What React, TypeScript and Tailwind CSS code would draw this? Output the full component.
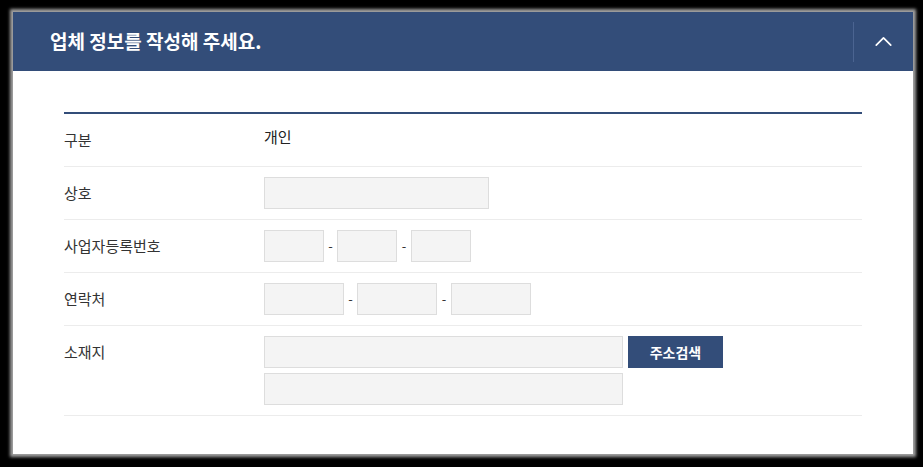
import { ChevronUp } from "lucide-react";

const font = { fontFamily: '"Noto Sans CJK KR", "Noto Sans", sans-serif' };

function Field({ w }: { w: string }) {
  return <div className={`${w} h-8 bg-[#f4f4f4] border border-[#dddddd]`} />;
}

function Dash({ w = "w-[13px]" }: { w?: string }) {
  return <span className={`${w} text-center text-[13px] leading-8 text-[#333]`}>-</span>;
}

function Row({ label, children }: { label: string; children: React.ReactNode }) {
  return (
    <div className="flex border-b border-[#ececec] py-[10px]">
      <div className="w-[200px] shrink-0 text-[15px] leading-8 text-[#333]">{label}</div>
      <div className="flex-1">{children}</div>
    </div>
  );
}

export default function App() {
  return (
    <div className="w-[923px] h-[467px] bg-black pt-[12px] pl-[13px]" style={font}>
      <div className="w-[900px] h-[442px] bg-white shadow-[0_0_3px_3px_rgba(190,190,190,0.85)]">
        <div className="h-[59px] bg-[#334d79] flex items-center">
          <h2 className="flex-1 pl-[37px] text-[19px] font-bold text-white">업체 정보를 작성해 주세요.</h2>
          <div className="w-px h-[40px] bg-[#4b6491]" />
          <button className="w-[59px] h-full flex items-center justify-center text-white">
            <ChevronUp size={29} strokeWidth={1.4} />
          </button>
        </div>

        <div className="px-[51px] pt-[41px]">
          <div className="border-t-2 border-[#334d79]">
            <Row label="구분">
              <div className="text-[15px] leading-8 text-[#222] -mt-[3px]">개인</div>
            </Row>
            <Row label="상호">
              <Field w="w-[225px]" />
            </Row>
            <Row label="사업자등록번호">
              <div className="flex">
                <Field w="w-[60px]" />
                <Dash />
                <Field w="w-[60px]" />
                <Dash w="w-[14px]" />
                <Field w="w-[60px]" />
              </div>
            </Row>
            <Row label="연락처">
              <div className="flex">
                <Field w="w-[80px]" />
                <Dash />
                <Field w="w-[80px]" />
                <Dash w="w-[14px]" />
                <Field w="w-[80px]" />
              </div>
            </Row>
            <Row label="소재지">
              <div className="flex flex-col gap-[5px]">
                <div className="flex gap-[5px]">
                  <Field w="w-[359px]" />
                  <button className="w-[95px] h-8 bg-[#334d79] text-white text-[14px] font-bold">주소검색</button>
                </div>
                <Field w="w-[359px]" />
              </div>
            </Row>
          </div>
        </div>
      </div>
    </div>
  );
}
